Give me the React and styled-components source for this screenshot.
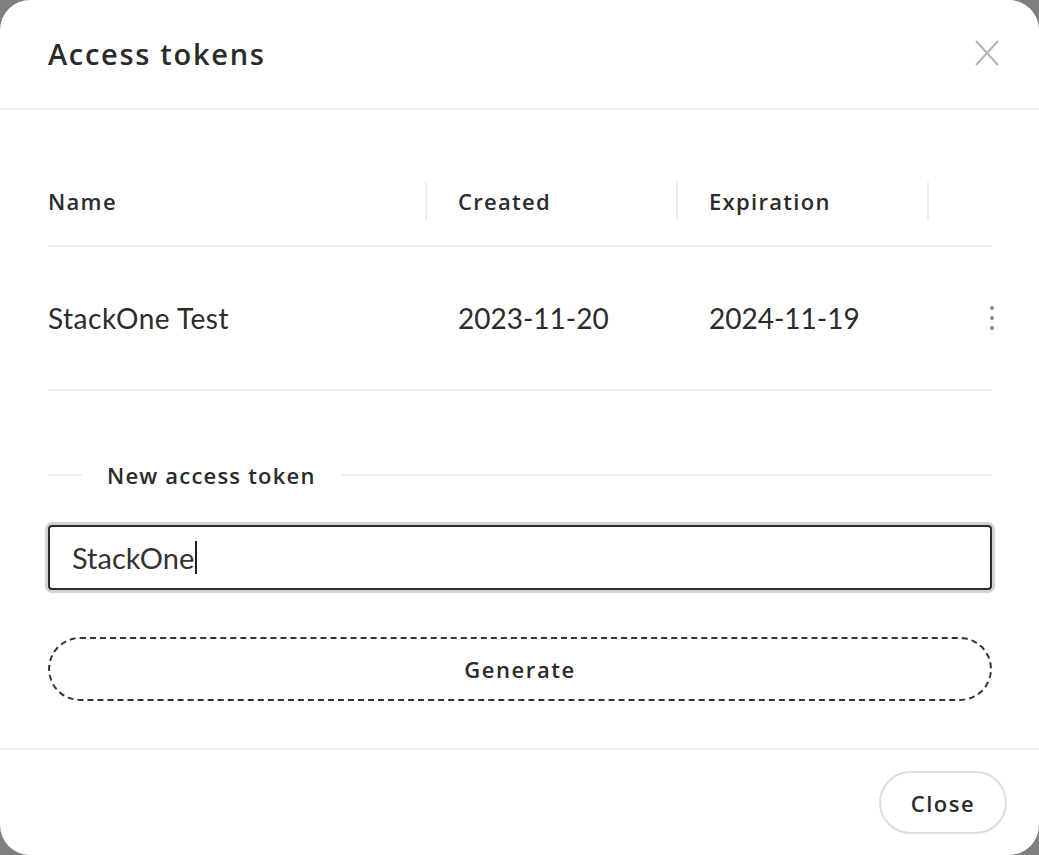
import React from 'react';
import styled, { createGlobalStyle } from 'styled-components';

const GlobalStyle = createGlobalStyle`
  html, body {
    margin: 0;
    padding: 0;
    height: 100%;
    background: #7f7f7f;
  }
  #root {
    height: 100%;
  }
  * {
    box-sizing: border-box;
  }
`;

const headingFont = '"Open Sans", Lato, "Liberation Sans", sans-serif';
const bodyFont = 'Lato, "Liberation Sans", sans-serif';

const Modal = styled.div`
  width: 1039px;
  height: 855px;
  background: #fff;
  border-radius: 30px;
  display: flex;
  flex-direction: column;
  font-family: ${bodyFont};
  color: #2b2b2b;
  overflow: hidden;
`;

const Header = styled.header`
  height: 110px;
  flex: none;
  display: flex;
  align-items: center;
  justify-content: space-between;
  padding: 0 40px 2px 48px;
  border-bottom: 2px solid #eeeeee;
`;

const Title = styled.h1`
  margin: 0;
  font-family: ${headingFont};
  font-size: 29px;
  font-weight: 600;
  letter-spacing: 1.7px;
`;

const IconButton = styled.button`
  width: 24px;
  height: 26px;
  padding: 0;
  border: none;
  background: none;
  display: flex;
  align-items: center;
  justify-content: center;
  cursor: pointer;
`;

const Body = styled.main`
  flex: 1;
  padding: 47px 47px 0 48px;
  display: flex;
  flex-direction: column;
`;

const Row = styled.div`
  display: grid;
  grid-template-columns: 377px 251px 251px 1fr;
  align-items: center;
  height: ${p => (p.$head ? '90px' : '144px')};
  border-bottom: 2px solid #eeeeee;
`;

const HeadCell = styled.div`
  font-family: ${headingFont};
  font-size: 22px;
  font-weight: 600;
  letter-spacing: 1.3px;
  height: 38px;
  display: flex;
  align-items: center;
  padding-left: ${p => (p.$first ? '0' : '31px')};
  border-left: ${p => (p.$first ? 'none' : '2px solid #eeeeee')};
`;

const Cell = styled.div`
  font-size: 28px;
  font-weight: 400;
  letter-spacing: ${p => (p.$first ? '0.5px' : '0')};
  padding-left: ${p => (p.$first ? '0' : '33px')};
  white-space: nowrap;
`;

const MenuCell = styled.div`
  display: flex;
  justify-content: flex-end;
  margin-right: -12px;
`;

const Kebab = styled.button`
  width: 24px;
  height: 30px;
  padding: 0;
  border: none;
  background: none;
  display: flex;
  flex-direction: column;
  align-items: center;
  justify-content: center;
  gap: 6px;
  cursor: pointer;
`;

const Dot = styled.span`
  width: 4px;
  height: 4px;
  border-radius: 50%;
  background: #8a8a8a;
`;

const SectionDivider = styled.div`
  display: flex;
  align-items: center;
  margin-top: 72px;
  height: 24px;
`;

const Line = styled.span`
  height: 2px;
  background: #eeeeee;
  width: ${p => p.$w || 'auto'};
  flex: ${p => (p.$w ? 'none' : '1')};
`;

const SectionLabel = styled.span`
  font-family: ${headingFont};
  font-size: 22px;
  font-weight: 600;
  letter-spacing: 1.2px;
  padding: 0 25px;
  white-space: nowrap;
`;

const Field = styled.div`
  margin-top: 38px;
  width: 100%;
  height: 65px;
  border: 2px solid #2b2b2b;
  border-radius: 4px;
  box-shadow: 0 0 0 3px #d2d2d2;
  padding: 0 22px;
  display: flex;
  align-items: center;
  font-size: 29px;
  font-weight: 400;
  color: #333;
`;

const Caret = styled.span`
  width: 2px;
  height: 33px;
  background: #222;
  margin-left: 1px;
`;

const DashedButton = styled.button`
  margin-top: 47px;
  width: 100%;
  height: 64px;
  border: 2px dashed #333;
  border-radius: 999px;
  background: #fff;
  font-family: ${headingFont};
  font-size: 22px;
  font-weight: 600;
  letter-spacing: 1.6px;
  color: #2b2b2b;
  cursor: pointer;
`;

const Footer = styled.footer`
  flex: none;
  height: 107px;
  border-top: 2px solid #eeeeee;
  display: flex;
  align-items: center;
  justify-content: flex-end;
  padding: 0 32px 0 0;
`;

const PillButton = styled.button`
  width: 128px;
  height: 63px;
  border: 2px solid #dddddd;
  border-radius: 999px;
  background: #fff;
  font-family: ${headingFont};
  font-size: 22px;
  font-weight: 600;
  letter-spacing: 1.5px;
  color: #2b2b2b;
  cursor: pointer;
`;

const tokens = [
  { name: 'StackOne Test', created: '2023-11-20', expires: '2024-11-19' },
];

export default function App() {
  return (
    <>
      <GlobalStyle />
      <Modal>
        <Header>
          <Title>Access tokens</Title>
          <IconButton aria-label="Close">
            <svg width="24" height="26" viewBox="0 0 24 26">
              <path d="M1 1 L23 25 M23 1 L1 25" stroke="#b3b3b3" strokeWidth="2" fill="none" />
            </svg>
          </IconButton>
        </Header>
        <Body>
          <Row $head>
            <HeadCell $first>Name</HeadCell>
            <HeadCell>Created</HeadCell>
            <HeadCell>Expiration</HeadCell>
            <HeadCell />
          </Row>
          {tokens.map(t => (
            <Row key={t.name}>
              <Cell $first>{t.name}</Cell>
              <Cell>{t.created}</Cell>
              <Cell>{t.expires}</Cell>
              <MenuCell>
                <Kebab aria-label="More">
                  <Dot />
                  <Dot />
                  <Dot />
                </Kebab>
              </MenuCell>
            </Row>
          ))}
          <SectionDivider>
            <Line $w="34px" />
            <SectionLabel>New access token</SectionLabel>
            <Line />
          </SectionDivider>
          <Field role="textbox" aria-label="Token name">
            StackOne
            <Caret />
          </Field>
          <DashedButton>Generate</DashedButton>
        </Body>
        <Footer>
          <PillButton>Close</PillButton>
        </Footer>
      </Modal>
    </>
  );
}
